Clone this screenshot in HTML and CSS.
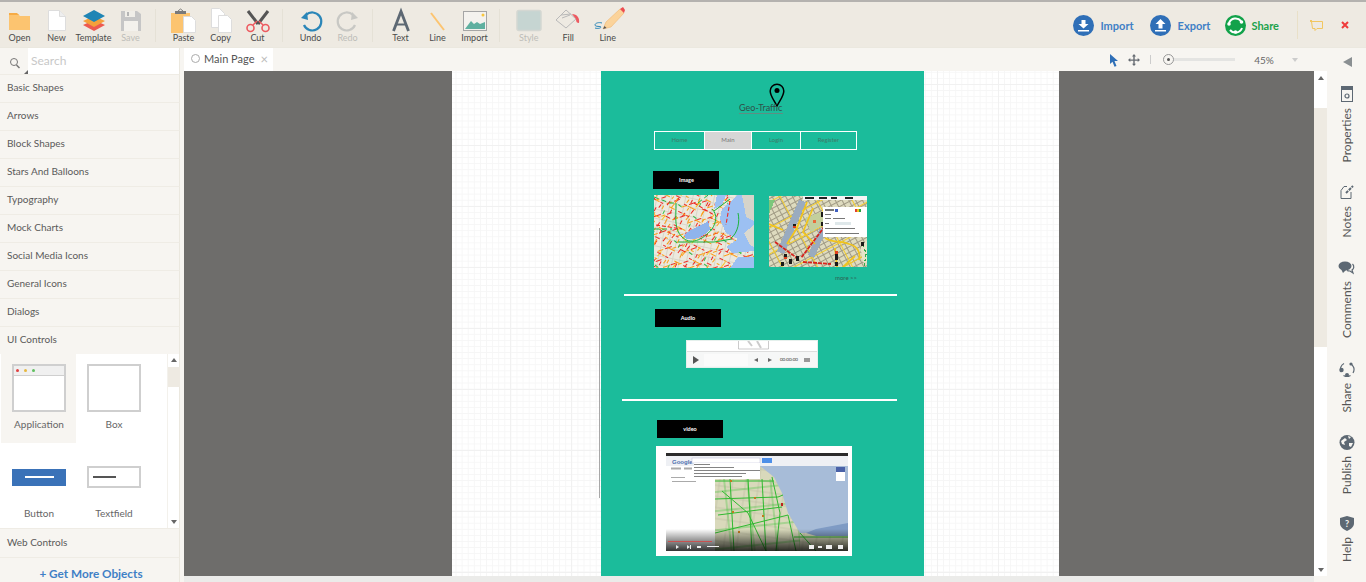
FILE: index.html
```html
<!DOCTYPE html>
<html lang="en">
<head>
<meta charset="utf-8">
<title>Geo-Traffic - Main Page</title>
<link rel="stylesheet" href="styles.css">
</head>
<body>
<div class="app">
  <header class="toolbar">
    <div class="tool-group">
      <div class="tool"><svg class="tool-icon" viewBox="0 0 36 24"><path d="M7 6h9l2 2h10v14H7z" fill="#fcc470"/><path d="M7 5h8l2 2H7z" fill="#f6ab45"/></svg><span>Open</span></div>
      <div class="tool"><svg class="tool-icon" viewBox="0 0 36 24"><path d="M9.500 2.500h11l6 6v14h-17z" fill="#fff" stroke="#ddd"/><path d="M20.500 2.500v6h6" fill="#eee" stroke="#ddd"/></svg><span>New</span></div>
      <div class="tool"><svg class="tool-icon" viewBox="0 0 36 24"><path d="M18 12l11 5-11 6-11-6z" fill="#ed5a50"/><path d="M18 8l11 5-11 6-11-6z" fill="#f5a13b"/><path d="M18 2l11 6-11 6-11-6z" fill="#1f85b5"/></svg><span>Template</span></div>
      <div class="tool disabled"><svg class="tool-icon" viewBox="0 0 36 24"><path d="M8 3h16l4 3v17H8z" fill="#c6c6c6"/><rect x="12" y="3" width="10" height="6" fill="#f0eee8"/><rect x="14" y="4" width="2" height="4" fill="#b5b5b5"/><rect x="11" y="13" width="14" height="10" fill="#f3f1ec"/></svg><span>Save</span></div>
    </div>
    <div class="tool-group">
      <div class="tool"><svg class="tool-icon" viewBox="0 0 36 24"><rect x="5" y="5" width="19" height="20" fill="#fcc470"/><rect x="9" y="3" width="11" height="3" fill="#7a7a7a"/><path d="M12 3l2.500-2 2.500 2" fill="none" stroke="#7a7a7a"/><path d="M17.500 8.500h8l4 4v12h-12z" fill="#fff" stroke="#ddd"/></svg><span>Paste</span></div>
      <div class="tool"><svg class="tool-icon" viewBox="0 0 36 24"><path d="M8.500.5h8l5 5v14h-13z" fill="#fff" stroke="#ddd"/><path d="M15.500 7.500h9l4 4v13h-13z" fill="#fff" stroke="#ddd"/></svg><span>Copy</span></div>
      <div class="tool"><svg class="tool-icon" viewBox="0 0 36 24"><path d="M8 3l10 13M28 3L18 16" stroke="#555" stroke-width="3" fill="none"/><circle cx="10.500" cy="20" r="3.500" fill="none" stroke="#ed5a60" stroke-width="1.600"/><circle cx="25.500" cy="20" r="3.500" fill="none" stroke="#ed5a60" stroke-width="1.600"/><path d="M13 17l4-4M23 17l-4-4" stroke="#ed5a60" stroke-width="1.500"/></svg><span>Cut</span></div>
    </div>
    <div class="tool-group">
      <div class="tool"><svg class="tool-icon" viewBox="0 0 36 24"><path d="M13 7a9 9 0 1 1-2 10" fill="none" stroke="#2a86b8" stroke-width="2.200"/><path d="M8 10l6-6 1 8z" fill="#2a86b8"/></svg><span>Undo</span></div>
      <div class="tool disabled"><svg class="tool-icon" viewBox="0 0 36 24"><path d="M23 7a9 9 0 1 0 2 10" fill="none" stroke="#c8c8c4" stroke-width="2.200"/><path d="M28 10l-6-6-1 8z" fill="#c8c8c4"/></svg><span>Redo</span></div>
    </div>
    <div class="tool-group">
      <div class="tool"><svg class="tool-icon" viewBox="0 0 36 24"><path d="M10.500 23L18 3.500 25.500 23" fill="none" stroke="#5d6873" stroke-width="2.800"/><path d="M13 16.500h10" stroke="#5d6873" stroke-width="2"/></svg><span>Text</span></div>
      <div class="tool"><svg class="tool-icon" viewBox="0 0 36 24"><path d="M11 5l13 17" stroke="#fcc470" stroke-width="2"/></svg><span>Line</span></div>
      <div class="tool"><svg class="tool-icon" viewBox="0 0 36 24"><rect x="6.500" y="3.500" width="23" height="19" fill="#f4f2ee" stroke="#a5a5a5"/><path d="M8 21l6-8 3 3 3-2 3 2 5-2v7z" fill="#5fb0a0"/><circle cx="26" cy="7" r="1.500" fill="#f8c63c"/></svg><span>Import</span></div>
    </div>
    <div class="tool-group wide">
      <div class="tool disabled"><svg class="tool-icon" viewBox="0 0 36 24"><rect x="6" y="2.500" width="24" height="20" rx="2" fill="#c6d5d2" stroke="#d4d7d2" stroke-width="1.500"/></svg><span>Style</span></div>
      <div class="tool"><svg class="tool-icon" viewBox="0 0 36 24"><path d="M6 12l10-10 10 9-10 9z" fill="none" stroke="#b9b9b9"/><path d="M11 7l10-1M12 10l8-3" stroke="#b9b9b9"/><path d="M22 6c5 0 8 4 7 9-2 0-3-1-3-4z" fill="#ed5a60"/></svg><span>Fill</span></div>
      <div class="tool"><svg class="tool-icon" viewBox="0 0 36 24"><path d="M13 21l3-7 14-13 4 4-13 14z" fill="#fbd39a" stroke="#f0b770" stroke-width=".6"/><path d="M30 1l4 4 1-3-2-3z" fill="#ed4d50"/><path d="M13 21l1.500-3 2 2z" fill="#555"/><path d="M12 15c-3-1-7 0-7 2s6 1 6 2-3 2-6 1" fill="none" stroke="#2a86b8"/></svg><span>Line</span></div>
    </div>
    <div class="actions">
      <div class="action blue"><svg class="action-icon" viewBox="0 0 21 21"><circle cx="10.500" cy="10.500" r="10.500" fill="#2f6fb7"/><path d="M8.500 5h4v4h3l-5 4.500L5.500 9h3z" fill="#fff"/><rect x="5" y="15" width="11" height="1.500" fill="#fff"/></svg><span>Import</span></div>
      <div class="action blue export"><svg class="action-icon" viewBox="0 0 21 21"><circle cx="10.500" cy="10.500" r="10.500" fill="#2f6fb7"/><path d="M10.500 4l5 5h-3v4.500h-4V9h-3z" fill="#fff"/><rect x="5" y="15" width="11" height="1.500" fill="#fff"/></svg><span>Export</span></div>
      <div class="action green"><svg class="action-icon" viewBox="0 0 21 21"><circle cx="10.500" cy="10.500" r="10.500" fill="#12a24a"/><path d="M4 8a7 7 0 0 1 12-2M17 13a7 7 0 0 1-12 2" fill="none" stroke="#fff" stroke-width="2"/><circle cx="4" cy="9" r="1.800" fill="#fff"/><circle cx="16.500" cy="7" r="1.800" fill="#fff"/><circle cx="10.500" cy="17" r="1.800" fill="#fff"/></svg><span>Share</span></div>
      <div class="window-btns">
        <svg class="win-icon" viewBox="0 0 14 12"><path d="M1.500 2.500h11v7H7l-2 2v-2H2.500z" fill="none" stroke="#f2c760"/><rect x="0" y="1" width="2" height="2" fill="#f2c760"/></svg>
        <svg class="win-icon" viewBox="0 0 14 12"><path d="M4 3l6 6M10 3l-6 6" stroke="#ef3b3b" stroke-width="2"/></svg>
      </div>
    </div>
  </header>

  <main class="main">
    <aside class="sidebar">
      <div class="search">
        <span class="search-icon"><svg viewBox="0 0 12 13" width="12" height="13"><circle cx="5" cy="5" r="3.500" fill="none" stroke="#777"/><path d="M7.500 8l3 3" stroke="#777" stroke-width="1.500"/></svg></span>
        <div class="search-input">Search</div>
      </div>
      <div class="cat">Basic Shapes</div>
      <div class="cat">Arrows</div>
      <div class="cat">Block Shapes</div>
      <div class="cat">Stars And Balloons</div>
      <div class="cat">Typography</div>
      <div class="cat">Mock Charts</div>
      <div class="cat">Social Media Icons</div>
      <div class="cat">General Icons</div>
      <div class="cat">Dialogs</div>
      <div class="cat">UI Controls</div>
      <div class="shapes">
        <div class="shape-grid">
          <div class="shape active">
            <div class="thumb-app"><div class="thumb-title"><i class="dot-r"></i><i class="dot-y"></i><i class="dot-g"></i></div></div>
            <span>Application</span>
          </div>
          <div class="shape"><div class="thumb-box"></div><span>Box</span></div>
          <div class="shape"><div class="thumb-slot"><div class="thumb-btn"><i></i></div></div><span>Button</span></div>
          <div class="shape"><div class="thumb-slot"><div class="thumb-field"><i></i></div></div><span>Textfield</span></div>
        </div>
        <div class="side-scroll">
          <i class="arrow-up"></i><div class="side-thumb"></div><i class="arrow-down"></i>
        </div>
      </div>
      <div class="cat web">Web Controls</div>
      <div class="more">+ Get More Objects</div>
    </aside>

    <section class="workspace">
      <div class="tabbar">
        <div class="tab"><i class="tab-ring"></i><span>Main Page</span><b>×</b></div>
        <div class="view-tools">
          <svg class="vt" viewBox="0 0 12 14" width="12" height="14"><path d="M3 1l8 7H7.500l2 5-2 .8-2-5L3 11z" fill="#2f6fb7"/></svg>
          <svg class="vt" viewBox="0 0 12 12" width="12" height="12"><path d="M6 0l2 2.500H6.700v3h3V4L12 6 9.700 8V6.700h-3v3H8L6 12 4 9.700h1.300v-3h-3V8L0 6l2.300-2v1.500h3v-3H4z" fill="#666b72"/></svg>
          <i class="vt-sep"></i>
          <div class="slider"><i></i></div>
          <span class="zoom-val">45%</span>
          <i class="zoom-caret"></i>
        </div>
      </div>
      <div class="stage-row">
        <div class="stage">
          <div class="page">
            <i class="guide"></i>
            <div class="board">
              <svg class="pin" viewBox="0 0 16 24"><path d="M8 23C5 17 1.200 13 1.200 8a6.800 6.800 0 0 1 13.600 0C14.800 13 11 17 8 23z" fill="none" stroke="#000" stroke-width="1.500"/><circle cx="8" cy="7.500" r="2.500" fill="#000"/></svg>
              <div class="logo-text">Geo-Traffic</div>
              <nav class="nav"><a class="n1">Home</a><a class="n2 on">Main</a><a class="n3">Login</a><a class="n4">Register</a></nav>
              <div class="black b1">Image</div>
              <svg class="map m1" viewBox="0 0 100 73" preserveAspectRatio="none" shape-rendering="crispEdges">
                <defs>
                  <pattern id="mesh-a" width="29" height="23" patternUnits="userSpaceOnUse" patternTransform="rotate(27)">
                    <path d="M0 3h4M9 3h3M20 13h5M2 17h3" stroke="#ee2a22" fill="none"/>
                    <path d="M5 3h3M19 3h6M6 17h9M0 9h3" stroke="#fb9d16" fill="none"/>
                    <path d="M22 5v4M7 10v4" stroke="#ee2a22" fill="none"/>
                    <path d="M22 15v6M13 5v4" stroke="#fb9d16" fill="none"/>
                    <path d="M16 9v4" stroke="#3cc04a" fill="none"/>
                  </pattern>
                  <pattern id="mesh-b" width="31" height="19" patternUnits="userSpaceOnUse" patternTransform="rotate(-52)">
                    <path d="M0 2h6M14 11h4M8 16h3" stroke="#fb9d16" fill="none"/>
                    <path d="M8 2h5M24 11h4M0 16h5" stroke="#ee2a22" fill="none"/>
                    <path d="M16 2h6" stroke="#f7c21e" fill="none"/>
                    <path d="M7 6v4" stroke="#26b53e" fill="none"/>
                  </pattern>
                  <pattern id="mesh-f" width="17" height="37" patternUnits="userSpaceOnUse" patternTransform="rotate(71)">
                    <path d="M3 0v7M12 14v6M5 26v5" stroke="#ee2a22" fill="none"/>
                    <path d="M3 9v6M12 22v6M5 33v4" stroke="#fb9d16" fill="none"/>
                  </pattern>
                  <pattern id="mesh-c" width="7" height="9" patternUnits="userSpaceOnUse" patternTransform="rotate(12)">
                    <path d="M0 4h7M3 0v9" stroke="#d8d5c8" fill="none"/>
                  </pattern>
                </defs>
                <rect width="100" height="73" fill="#ece9de"/>
                <rect width="100" height="73" fill="url(#mesh-c)"/>
                <rect width="100" height="73" fill="url(#mesh-f)"/>
                <rect width="100" height="73" fill="url(#mesh-b)"/>
                <rect width="100" height="73" fill="url(#mesh-a)"/>
                <path d="M100 0H84L68 14 66 24 72 38 84 44 72 52 78 58 100 56z" fill="#9cc0f2"/>
                <path d="M72 0l-4 10-8 4 3-14z" fill="#9cc0f2"/>
                <path d="M88 0h12v26l-8-4-2-12z" fill="#d6d4ca"/>
                <path d="M100 30l-10 8 6 12 4 2z" fill="#dbd9cf"/>
                <path d="M84 62h16v11H76z" fill="#9cc0f2"/>
                <path d="M30 40C36 34 46 32 54 26L56 34C50 42 40 46 32 44z" fill="#8fb4ec"/>
                <g shape-rendering="auto" fill="none" stroke="#1cb43c" stroke-width="1">
                  <path d="M22 8C22 24 20 34 28 42 36 50 48 46 58 34 62 28 64 20 58 14M24 47H60L78 44M77 43C84 38 86 26 84 18M60 16L76 4"/>
                  <path d="M0 2L16 8 22 8M0 34L18 34M44 8L54 0" stroke-dasharray="5 3"/>
                </g>
                <g shape-rendering="auto" fill="none" stroke="#ee2a22" stroke-width="1.100" stroke-dasharray="4 2"><path d="M2 30L28 34M40 8L60 20M76 6L72 30"/></g>
              </svg>
              <svg class="map m2" viewBox="0 0 98 71" preserveAspectRatio="none" shape-rendering="crispEdges">
                <defs>
                  <pattern id="mesh-d" width="6" height="5" patternUnits="userSpaceOnUse" patternTransform="rotate(-28)">
                    <path d="M0 2h6M2 0v5" stroke="#a09a84" fill="none"/>
                  </pattern>
                  <pattern id="mesh-e" width="31" height="23" patternUnits="userSpaceOnUse" patternTransform="rotate(-28)">
                    <path d="M0 5h31M9 0v23" stroke="#f4cd2c" fill="none"/>
                  </pattern>
                </defs>
                <rect width="98" height="71" fill="#dedbbf"/>
                <rect width="98" height="71" fill="url(#mesh-d)"/>
                <rect width="98" height="71" fill="url(#mesh-e)"/>
                <path d="M30 4l7 2-22 52-7-3z" fill="#9aabbf"/>
                <path d="M51 32l6 3-12 27-6-3z" fill="#9aabbf"/>
                <path d="M36 22l16-6 4 12-14 8z" fill="#c3cf9c"/>
                <path d="M0 4l6 0-6 14z" fill="#7cc77c"/>
                <path d="M92 52l6-8v22l-4 0z" fill="#e7e3c8"/>
                <g shape-rendering="auto" fill="none" stroke="#f2c41c" stroke-width="1.700">
                  <path d="M38 6L28 32 18 48M56 42C66 48 72 44 80 48 88 50 92 56 90 64M68 71L66 52M86 60L74 71M44 12L34 36 46 48M0 28L14 34"/>
                </g>
                <g shape-rendering="auto" fill="none" stroke="#d9231d" stroke-width="1.800" stroke-dasharray="4 1">
                  <path d="M6 46L28 62M56 30L44 46 32 62M34 66L62 68"/>
                </g>
                <path d="M94 48l3 10-2 13" fill="none" stroke="#35a84a" stroke-width="1.200" stroke-dasharray="3 2"/>
                <g fill="#1b1a18"><rect x="27" y="60" width="3" height="5"/><rect x="15" y="58" width="3" height="5"/><rect x="20" y="63" width="3" height="5"/><rect x="66" y="58" width="3" height="6"/><rect x="52" y="26" width="3" height="4"/><rect x="52" y="16" width="3" height="5"/><rect x="92" y="46" width="3" height="4"/><rect x="24" y="28" width="3" height="4"/><rect x="12" y="66" width="3" height="4"/><rect x="66" y="66" width="3" height="4"/></g>
                <g fill="#e0401e"><rect x="24" y="30" width="3" height="2"/><rect x="15" y="61" width="3" height="2"/><rect x="66" y="55" width="3" height="3"/></g>
                <rect x="44" y="24" width="3" height="3" fill="#e86b3a"/>
                <rect x="34" y="0" width="64" height="4" fill="#f5f5f5"/>
                <g fill="#222"><rect x="36" y="1" width="9" height="2"/><rect x="50" y="1" width="8" height="2"/><rect x="62" y="1" width="6" height="2"/><rect x="76" y="1" width="8" height="2"/></g>
                <rect x="54" y="11" width="44" height="30" fill="#fff"/>
                <g fill="#777"><rect x="56" y="13" width="9" height="2"/><rect x="56" y="18" width="6" height="1"/><rect x="56" y="22" width="6" height="1"/><rect x="64" y="22" width="12" height="1"/><rect x="56" y="27" width="4" height="1"/><rect x="56" y="32" width="30" height="1"/><rect x="56" y="37" width="34" height="1"/></g>
                <rect x="66" y="26" width="16" height="3" fill="#dfe8ea"/>
                <rect x="66" y="13" width="3" height="3" fill="#4060c0"/>
                <rect x="86" y="13" width="2" height="3" fill="#e04030"/><rect x="88" y="13" width="2" height="3" fill="#f4c020"/><rect x="90" y="13" width="2" height="3" fill="#2aa040"/>
              </svg>
              <div class="more-link">more &gt;&gt;</div>
              <div class="rule r1"></div>
              <div class="black b2">Audio</div>
              <div class="player">
                <svg class="player-top" viewBox="0 0 130 10"><path d="M51.500 0v8M81.500 0v8M51.500 8h30" fill="none" stroke="#aaa" stroke-width=".6"/><path d="M61 0l4 5M70 0l4 7" stroke="#ccc" stroke-width="2"/></svg>
                <div class="player-bar">
                  <i class="play"></i>
                  <div class="track"></div>
                  <i class="p-back"></i><i class="p-next"></i>
                  <span class="p-time">00:00:00</span>
                  <i class="p-vol"></i>
                </div>
              </div>
              <div class="rule r2"></div>
              <div class="black b3">video</div>
              <div class="video">
                <svg viewBox="0 0 182 98" preserveAspectRatio="none" class="video-pic">
                  <defs>
                    <pattern id="mesh-v" width="13" height="11" patternUnits="userSpaceOnUse" patternTransform="rotate(8)">
                      <path d="M0 3h13M5 0v11" stroke="#b9b89c" stroke-width=".6" fill="none"/>
                    </pattern>
                    <pattern id="mesh-w" width="23" height="19" patternUnits="userSpaceOnUse" patternTransform="rotate(-6)">
                      <path d="M0 6h23M9 0v19" stroke="#4cc444" stroke-width=".7" fill="none"/>
                    </pattern>
                    <linearGradient id="vfade" x1="0" y1="0" x2="0" y2="1"><stop offset="0" stop-color="#000" stop-opacity="0"/><stop offset="1" stop-color="#000" stop-opacity=".8"/></linearGradient>
                  </defs>
                  <rect width="182" height="98" fill="#fff"/>
                  <rect width="182" height="3" fill="#2b2b2b"/>
                  <rect y="3" width="182" height="10" fill="#eef0f4"/>
                  <text x="6" y="10.500" class="g-logo">Google</text>
                  <rect x="26" y="5" width="68" height="5" fill="#fff" stroke="#aac" stroke-width=".4"/>
                  <rect x="96" y="5" width="10" height="5" fill="#4d8fe8"/>
                  <rect x="49" y="13" width="133" height="85" fill="#d9d9bb"/>
                  <rect x="49" y="13" width="133" height="85" fill="url(#mesh-v)"/>
                  <rect x="49" y="26" width="85" height="72" fill="url(#mesh-w)"/>
                  <path d="M94 13H182V72L150 80H134L122 60 116 40 108 24z" fill="#a7bcd8"/>
                  <path d="M140 80L150 76 182 70V83H150z" fill="#7f9bc4"/>
                  <rect x="28" y="10" width="66" height="16" fill="#fff"/>
                  <g fill="#666"><rect x="28" y="11" width="16" height=".8"/><rect x="28" y="14" width="40" height=".8"/><rect x="28" y="17" width="66" height=".8"/><rect x="28" y="20" width="52" height=".8"/><rect x="28" y="23" width="48" height=".8"/></g>
                  <g fill="#aaa"><rect x="5" y="14.500" width="10" height="2"/><rect x="18" y="14.500" width="8" height="2"/><rect x="5" y="24" width="14" height="1"/><rect x="6" y="28" width="24" height="1"/></g>
                  <g fill="none" stroke="#2fb92f" stroke-width="1">
                    <path d="M49 28H108M49 46L112 44 117 42M52 62L116 54M49 80L90 70 122 62M64 26L68 98M82 26L86 98M96 26L100 98M106 24L114 60 110 98M122 62L130 98M56 38L82 60 100 98M134 80L150 98M128 84H182"/>
                  </g>
                  <rect x="115" y="50" width="2" height="3" fill="#c02020"/>
                  <g fill="#c27a1e"><rect x="64" y="27" width="2" height="2"/><rect x="88" y="44" width="2" height="2"/><rect x="66" y="58" width="2" height="2"/><rect x="72" y="78" width="2" height="2"/><rect x="96" y="62" width="2" height="2"/></g>
                  <rect x="170" y="14" width="9" height="5" fill="#4a62a8"/>
                  <rect x="170" y="19" width="9" height="9" fill="#fff"/>
                  <rect y="76" width="182" height="22" fill="url(#vfade)"/>
                  <rect x="2" y="88" width="44" height="1" fill="#c85050"/>
                  <g fill="#eee"><path d="M10 92l3 2-3 2zM21 92l3 2-3 2z"/><rect x="24" y="92" width="1" height="4"/><rect x="31" y="93" width="4" height="2"/><rect x="41" y="93" width="12" height="1"/><rect x="143" y="92" width="5" height="4"/><rect x="152" y="93" width="4" height="2"/><rect x="160" y="92" width="6" height="4"/><rect x="172" y="92" width="5" height="4"/></g>
                </svg>
              </div>
            </div>
          </div>
        </div>
        <div class="vscroll"><i class="arrow-up"></i><div class="v-thumb"></div><i class="arrow-down"></i></div>
      </div>
      <div class="hscroll"></div>
    </section>

    <aside class="rail">
      <i class="rail-collapse"></i>
      <div class="rail-item i-props">
        <svg viewBox="0 0 12 16" width="12" height="16"><rect x=".5" y=".5" width="11" height="15" fill="#f7f5f1" stroke="#5d6873"/><rect width="12" height="4" fill="#5d6873"/><circle cx="6" cy="10" r="2" fill="none" stroke="#5d6873" stroke-width="1.200"/></svg>
        <span>Properties</span>
      </div>
      <div class="rail-item i-notes">
        <svg viewBox="0 0 14 16" width="14" height="16"><path d="M7 2.500H4l-3 4v8h10V8" fill="none" stroke="#5d6873"/><path d="M6 9l7-7" stroke="#5d6873" stroke-width="2" stroke-dasharray="3 1"/></svg>
        <span>Notes</span>
      </div>
      <div class="rail-item i-comments">
        <svg viewBox="0 0 17 14" width="17" height="14"><ellipse cx="7" cy="5" rx="6.500" ry="4.500" fill="#5d6873"/><path d="M3 8l2 4 3-3z" fill="#5d6873"/><path d="M14.500 3c2 2 1.500 5-.5 6l1 3-3-2c-1 0-2 0-3-.5" fill="none" stroke="#5d6873" stroke-width="1.200"/></svg>
        <span>Comments</span>
      </div>
      <div class="rail-item i-share">
        <svg viewBox="0 0 16 15" width="16" height="15"><path d="M2 10A6.500 6.500 0 0 1 5 1.500M11 1.500A6.500 6.500 0 0 1 14 11M4.500 13.500a6.500 6.500 0 0 0 7 0" fill="none" stroke="#5d6873" stroke-width="1.200"/><circle cx="2.500" cy="8" r="2.200" fill="#5d6873"/><circle cx="12" cy="2" r="1.600" fill="#5d6873"/><circle cx="8" cy="13" r="2" fill="#5d6873"/></svg>
        <span>Share</span>
      </div>
      <div class="rail-item i-publish">
        <svg viewBox="0 0 16 15" width="16" height="15"><circle cx="8" cy="7.500" r="7.500" fill="#5d6873"/><path d="M2 6l4-3 2 2-3 2 1 3-3-1zM10 8l4 0-2 4-2-1zM9 1l3 1-2 2z" fill="#f7f5f1"/></svg>
        <span>Publish</span>
      </div>
      <div class="rail-item i-help">
        <svg viewBox="0 0 14 15" width="14" height="15"><path d="M7 0l7 2v5c0 4-3 6-7 8-4-2-7-4-7-8V2z" fill="#5d6873"/><text x="7" y="10.500" class="help-mark">?</text></svg>
        <span>Help</span>
      </div>
    </aside>
  </main>
</div>
</body>
</html>
```
FILE: styles.css
```css
* { box-sizing: border-box; }
html, body { margin: 0; height: 100%; overflow: hidden; }
body { font-family: Lato, "Liberation Sans", sans-serif; color: #555; background: #f7f5f1; }
i { display: block; font-style: normal; }

.app { display: flex; flex-direction: column; width: 1366px; height: 582px; overflow: hidden; }

/* top toolbar */
.toolbar { display: flex; height: 48px; flex: none; padding-left: 1px; background: #eeeae2; border-top: 2px solid #b4b2af; border-bottom: 1px solid #ebe8df; }
.tool-group { display: flex; padding-right: 7px; margin-right: 9px; position: relative; }
.tool-group::after { content: ""; position: absolute; right: 0; top: 7px; bottom: 5px; width: 1px; background: #e5e1d6; }
.tool-group.wide { padding: 0; margin: 0; }
.tool-group.wide::after { display: none; }
.tool-group.wide .tool { width: 39.500px; }
.tool { width: 37px; display: flex; flex-direction: column; align-items: center; padding-top: 6px; font-size: 9px; line-height: 12px; color: #4a4a4a; }
.tool.disabled { color: #bdbdb8; }
.tool-icon { width: 36px; height: 24px; display: block; overflow: visible; flex: none; }

.actions { margin-left: auto; display: flex; align-items: center; padding: 1px 14px 0 0; }
.action { display: flex; align-items: center; gap: 6.500px; margin-right: 16.500px; font-size: 11px; font-weight: 700; }
.action.blue { color: #3f80c6; }
.action.export { margin-right: 15px; }
.action.green { color: #1ba24c; margin-right: 18px; gap: 5px; }
.action-icon { width: 21px; height: 21px; flex: none; }
.window-btns { display: flex; align-items: center; gap: 14px; padding: 8px 0 8px 12px; border-left: 1px solid #e9e0c8; }
.win-icon { width: 14px; height: 12px; display: block; }

/* main */
.main { display: flex; height: 534px; flex: none; }

/* sidebar */
.sidebar { width: 184px; flex: none; padding-right: 4px; display: flex; flex-direction: column; }
.sidebar > * { border-right: 1px solid #ebe8df; }
.search { display: flex; height: 26px; flex: none; }
.search-icon { width: 28px; padding: 6px 0 0 9px; position: relative; }
.search-icon::after { content: ""; position: absolute; right: 0; bottom: 0; border-left: 4px solid transparent; border-bottom: 4px solid #666; }
.search-input { flex: 1; background: #fff; font-size: 12px; line-height: 26px; padding-left: 3px; color: #c8c8c8; }
.cat { height: 28px; flex: none; padding-left: 7px; font-size: 10px; line-height: 25px; color: #5a5a5a; border-top: 1px solid #efece5; }
.shapes { height: 174px; flex: none; display: flex; background: #fff; }
.shape-grid { width: 167px; display: grid; grid-template-columns: 75px 75px; grid-auto-rows: 89px; align-content: start; padding-left: 1px; }
.shape { display: flex; flex-direction: column; align-items: center; padding: 10px 0 0 1px; font-size: 10px; color: #666; }
.shape.active { background: #f7f5f1; }
.shape span { line-height: 14px; margin-top: 5px; }
.thumb-app, .thumb-box { width: 54px; height: 48px; border: 2px solid #cfcfcf; background: #fff; }
.thumb-title { height: 10px; background: #f0f0f0; border-bottom: 1px solid #cfcfcf; display: flex; align-items: center; gap: 5px; padding-left: 2px; }
.thumb-title i { width: 3px; height: 3px; border-radius: 50%; }
.dot-r { background: #e04040; }
.dot-y { background: #e6b840; }
.dot-g { background: #60c060; }
.thumb-slot { height: 48px; width: 54px; display: flex; align-items: center; }
.thumb-btn { width: 55px; height: 17px; background: #3a72b8; display: flex; align-items: center; justify-content: center; }
.thumb-btn i { width: 29px; height: 2px; background: #fff; }
.thumb-field { width: 54px; height: 22px; border: 2px solid #cfcfcf; display: flex; align-items: center; padding-left: 4px; }
.thumb-field i { width: 23px; height: 2px; background: #555; }
.side-scroll { width: 12px; flex: none; display: flex; flex-direction: column; align-items: center; padding: 4px 0; border-left: 1px solid #f3f1ec; }
.side-thumb { width: 12px; height: 20px; margin-top: 5px; background: #eeeae2; }
.arrow-up, .arrow-down { width: 0; height: 0; border-left: 3px solid transparent; border-right: 3px solid transparent; flex: none; }
.arrow-up { border-bottom: 4px solid #666; }
.arrow-down { border-top: 4px solid #666; margin-top: auto; }
.cat.web { height: 29px; line-height: 26px; }
.more { flex: 1; text-align: center; font-size: 11.750px; font-weight: 700; color: #3f80c6; line-height: 32px; border-top: 1px solid #efece5; white-space: nowrap; padding-left: 3px; }

/* workspace */
.workspace { flex: 1; min-width: 0; display: flex; flex-direction: column; }
.tabbar { height: 23px; flex: none; display: flex; }
.tab { width: 89px; background: #fff; display: flex; align-items: center; padding: 0 0 2px 7px; font-size: 11px; color: #555; }
.tab-ring { width: 9px; height: 9px; border: 1px solid #aaa; border-radius: 50%; margin-right: 4px; }
.tab b { font-weight: 400; color: #bbb; font-size: 13px; margin-left: 6px; }
.view-tools { margin-left: auto; display: flex; align-items: center; padding-right: 29px; }
.vt { display: block; margin-right: 9px; }
.vt-sep { width: 1px; height: 9px; background: #ccc; margin: 0 12px 0 1px; }
.slider { width: 72px; height: 3px; background: #e4e4e2; position: relative; }
.slider i { position: absolute; left: 0; top: -4px; width: 11px; height: 11px; border-radius: 50%; background: #f7f5f1; border: 1px solid #999; }
.slider i::after { content: ""; display: block; width: 3px; height: 3px; margin: 3px; border-radius: 50%; background: #555; }
.zoom-val { font-size: 10px; width: 24px; margin-left: 17px; text-align: center; color: #666; }
.zoom-caret { width: 0; height: 0; border-left: 3.500px solid transparent; border-right: 3.500px solid transparent; border-top: 4px solid #ccc; margin-left: 16px; }
.stage-row { height: 505px; flex: none; display: flex; }
.stage { flex: 1; min-width: 0; background: #6e6d6b; padding-left: 268px; overflow: hidden; }
.page { width: 607px; height: 505px; position: relative; background-color: #fff;
  background-image: linear-gradient(#f1f1f1 1px, transparent 1px), linear-gradient(90deg, #f1f1f1 1px, transparent 1px), linear-gradient(#f6f6f6 1px, transparent 1px), linear-gradient(90deg, #f6f6f6 1px, transparent 1px);
  background-size: 61px 61px, 61px 61px, 6.100px 6.100px, 6.100px 6.100px;
  background-position: 0 13px, 58px 0, 0 .8px, 3.600px 0; }
.guide { position: absolute; left: 147px; top: 157px; width: 1px; height: 270px; background: #a8a8a8; }
.board { position: absolute; left: 149px; top: 0; width: 323px; height: 505px; background: #1bbc9b; }
.pin { position: absolute; left: 168px; top: 12px; width: 16px; height: 24px; }
.logo-text { position: absolute; left: 138px; top: 31px; width: 44px; font-size: 9px; line-height: 11px; color: #2f4f48; border-bottom: 1px solid #5f8d82; white-space: nowrap; }
.nav { position: absolute; left: 53px; top: 60px; width: 203px; height: 19px; display: flex; border: 1px solid #fff; font-size: 6px; line-height: 16px; color: #3f7a69; text-align: center; }
.nav a { display: block; border-right: 1px solid #fff; }
.nav .n4 { border-right: 0; flex: 1; }
.n1 { width: 50px; }
.n2 { width: 47px; }
.n3 { width: 49px; }
.nav .on { background: #d6d6d6; color: #777; }
.black { position: absolute; width: 66px; height: 18px; background: #000; color: #fff; font-size: 5.500px; font-weight: 700; line-height: 18px; text-align: center; }
.b1 { left: 52px; top: 100px; padding-left: 1px; }
.b2 { left: 54px; top: 238px; }
.b3 { left: 56px; top: 349px; }
.map { position: absolute; display: block; }
.m1 { left: 53px; top: 124px; width: 100px; height: 73px; }
.m2 { left: 168px; top: 125px; width: 98px; height: 71px; }
.more-link { position: absolute; left: 234px; top: 203px; font-size: 6px; line-height: 8px; color: #2f5f52; }
.rule { position: absolute; height: 2px; background: #fff; }
.r1 { left: 23px; top: 223px; width: 273px; }
.r2 { left: 21px; top: 328px; width: 275px; }
.player { position: absolute; left: 85px; top: 269px; width: 132px; height: 28px; background: #fff; border: 1px solid #e4f0ec; display: flex; flex-direction: column; }
.player-top { display: block; width: 130px; height: 10px; flex: none; }
.player-bar { flex: 1; display: flex; align-items: center; background: #f6f7f7; border-top: 1px solid #ddd; font-size: 4.500px; color: #333; }
.play { width: 0; height: 0; border-left: 6px solid #555; border-top: 4px solid transparent; border-bottom: 4px solid transparent; margin: 0 5px 0 6px; }
.track { width: 44px; height: 12px; background: #fbfbfb; }
.p-back { width: 0; height: 0; border-right: 4px solid #666; border-top: 2.500px solid transparent; border-bottom: 2.500px solid transparent; margin-left: 6px; }
.p-next { width: 0; height: 0; border-left: 4px solid #666; border-top: 2.500px solid transparent; border-bottom: 2.500px solid transparent; margin-left: 10px; }
.p-time { margin-left: 8px; width: 18px; white-space: nowrap; }
.p-vol { width: 6px; height: 4px; background: #999; margin-left: 6px; }
.video { position: absolute; left: 55px; top: 375px; width: 196px; height: 110px; background: #fff; padding: 7px 4px 5px 10px; }
.video-pic { display: block; width: 182px; height: 98px; }
.g-logo { font-family: "Liberation Sans", sans-serif; font-size: 6px; font-weight: 700; fill: #4d6fb0; }
.vscroll { width: 13px; flex: none; background: #fff; display: flex; flex-direction: column; align-items: center; padding: 5px 0 4px; }
.v-thumb { width: 13px; height: 239px; margin-top: 28px; background: #eeeae2; flex: none; }
.hscroll { height: 6px; flex: none; background: #ebebe9; margin-right: 13px; }

/* right rail */
.rail { width: 39px; flex: none; display: flex; flex-direction: column; align-items: center; position: relative; }
.rail-collapse { width: 0; height: 0; margin: 9px 0 0 1px; border-right: 9px solid #8a8f92; border-top: 5px solid transparent; border-bottom: 5px solid transparent; flex: none; }
.rail-item { display: flex; flex-direction: column; align-items: center; gap: 6px; color: #555; font-size: 12px; }
.rail-item span { writing-mode: vertical-rl; transform: rotate(180deg); line-height: 14px; }
.rail-item svg { display: block; flex: none; }
.i-props { margin-top: 19px; }
.i-notes { margin-top: 22px; }
.i-comments { margin-top: 23px; }
.i-share { margin-top: 24px; }
.i-publish { margin-top: 23px; }
.i-help { margin-top: 22px; }
.help-mark { font-family: Lato, sans-serif; font-size: 9px; font-weight: 700; fill: #f7f5f1; text-anchor: middle; }
```
